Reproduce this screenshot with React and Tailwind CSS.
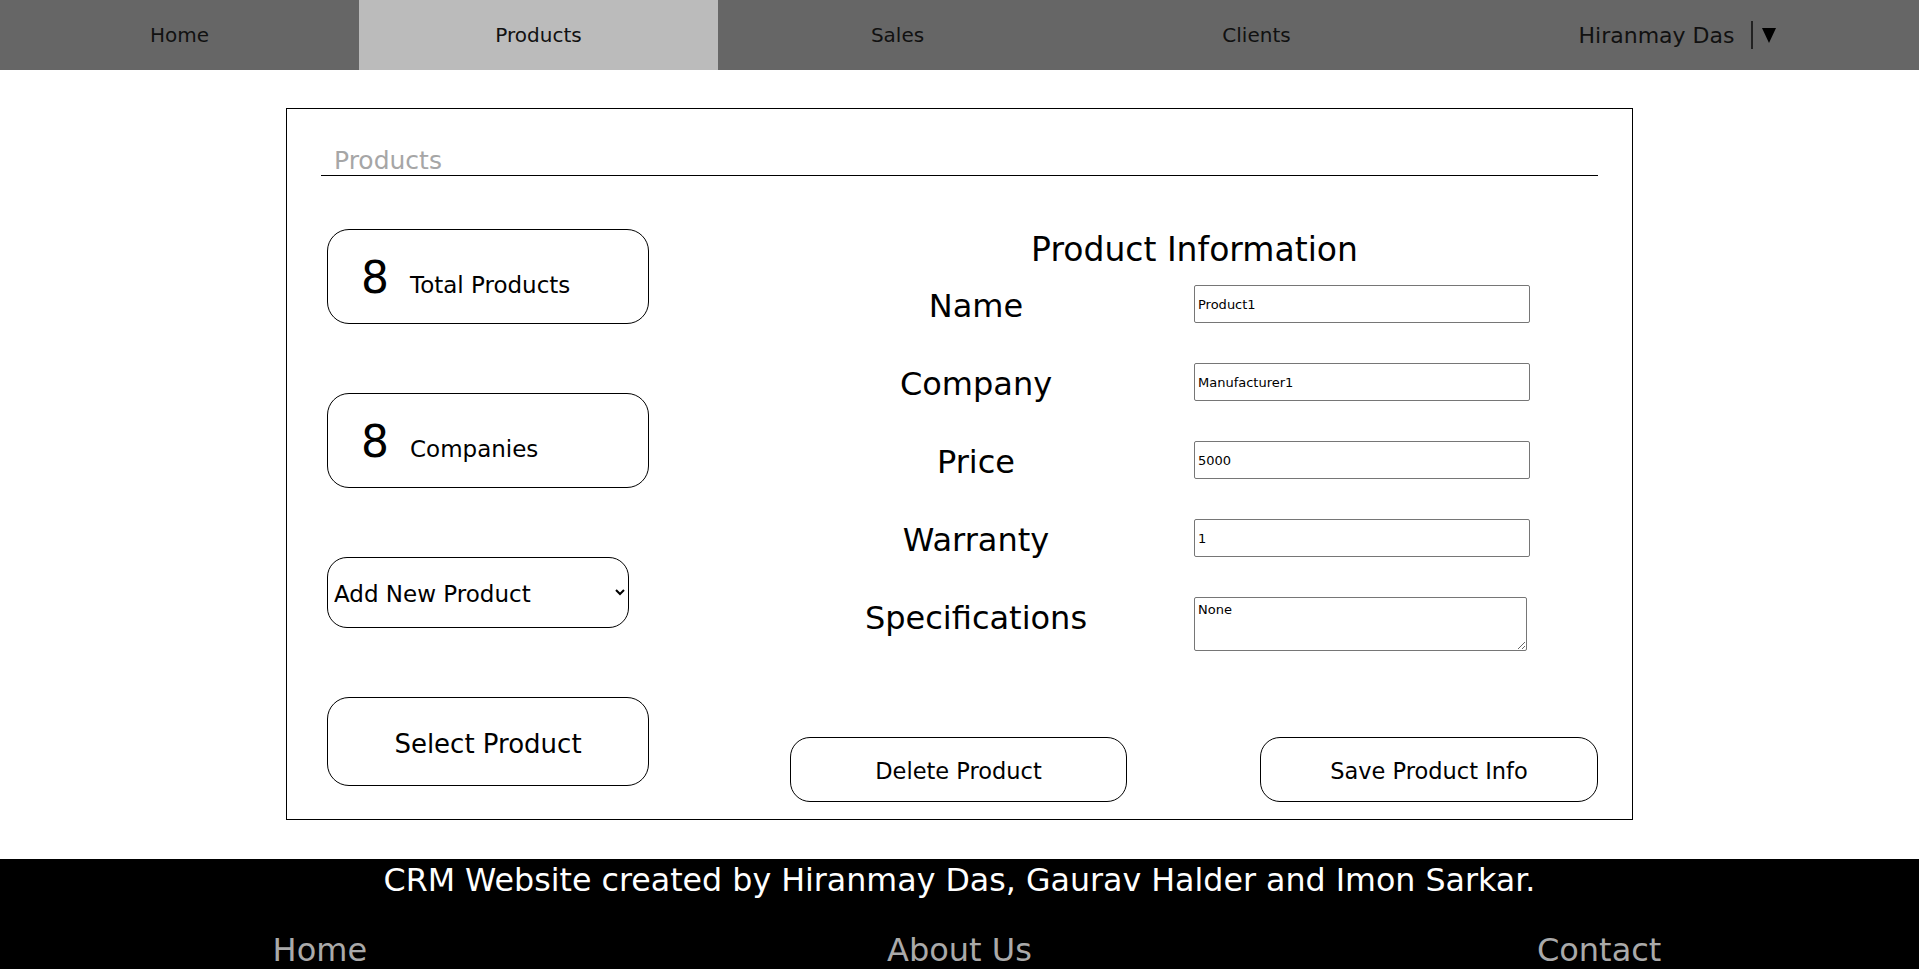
import React from 'react';

const navItems = ['Home', 'Products', 'Sales', 'Clients'];

const fields = [
  { label: 'Name', value: 'Product1' },
  { label: 'Company', value: 'Manufacturer1' },
  { label: 'Price', value: '5000' },
  { label: 'Warranty', value: '1' },
];

const StatCard = ({ count, label }) => (
  <div className="flex h-[95px] items-center rounded-[22px] border border-black pl-[33px] pt-[2px]">
    <div className="flex items-baseline">
      <span className="text-[44px]">{count}</span>
      <span className="ml-[21px] text-[23px]">{label}</span>
    </div>
  </div>
);

const App = () => {
  return (
    <div className="min-h-screen bg-white font-['DejaVu_Sans',sans-serif] text-black">
      {/* top nav */}
      <nav className="grid h-[70px] grid-cols-[359px_359px_359px_359px_1fr] bg-[#666666] text-[#111111]">
        {navItems.map((item) => (
          <a
            key={item}
            href="#"
            className={`flex items-center justify-center text-[20px] ${item === 'Products' ? 'bg-[#bbbbbb]' : ''}`}
          >
            {item}
          </a>
        ))}
        <div className="flex items-center justify-center">
          <span className="text-[22px]">Hiranmay Das</span>
          <span className="ml-[17px] h-[28px] w-[2px] bg-[#222222]" />
          <svg className="ml-[9px]" width="14" height="15" viewBox="0 0 14 15">
            <polygon points="0,0 14,0 7,15" fill="#000" />
          </svg>
        </div>
      </nav>

      {/* products panel */}
      <main className="mx-auto mb-[39px] mt-[38px] w-[1347px] border border-black px-[34px] pb-[17px] pt-[38px]">
        <h1 className="border-b border-black pl-[13px] text-[25px] leading-[28px] text-[#a6a6a6]">Products</h1>

        <div className="mt-[53px] flex items-start">
          <div className="ml-[6px] flex w-[322px] shrink-0 flex-col gap-[69px]">
            <StatCard count="8" label="Total Products" />
            <StatCard count="8" label="Companies" />
            <select className="h-[71px] w-[302px] rounded-[20px] border border-black pl-[2px] pt-[2px] text-[23px]" defaultValue="new">
              <option value="new">Add New Product</option>
              <option value="p1">Product1</option>
              <option value="p2">Product2</option>
            </select>
            <button className="h-[89px] rounded-[22px] border border-black pt-[5px] text-[26px]">Select Product</button>
          </div>

          <div className="-mr-[34px] ml-[109px] w-[873px] shrink-0">
            <h2 className="mt-[2px] text-center text-[33px] leading-[37px]">Product Information</h2>
            <div className="mt-[17px] flex flex-col gap-[40px]">
              {fields.map((f) => (
                <div key={f.label} className="grid grid-cols-[436px_1fr] items-start">
                  <label className="h-[38px] text-center text-[32px] leading-[43px]">{f.label}</label>
                  <input
                    type="text"
                    defaultValue={f.value}
                    className="h-[38px] w-[336px] rounded-[2px] border border-[#767676] px-[3px] text-[13px]"
                  />
                </div>
              ))}
              <div className="grid grid-cols-[436px_1fr] items-start">
                <label className="h-[38px] text-center text-[32px] leading-[43px]">Specifications</label>
                <textarea
                  defaultValue="None"
                  className="h-[54px] w-[333px] rounded-[2px] border border-[#767676] px-[3px] py-[2px] text-[13px]"
                />
              </div>
            </div>
            <div className="mt-[86px] flex">
              <button className="ml-[32px] h-[65px] w-[337px] rounded-[20px] border border-black pt-[5px] text-[22.5px]">Delete Product</button>
              <button className="ml-[133px] h-[65px] w-[338px] rounded-[20px] border border-black pt-[5px] text-[22.5px]">Save Product Info</button>
            </div>
          </div>
        </div>
      </main>

      {/* footer */}
      <footer className="bg-black pb-[30px] pt-[3px]">
        <p className="text-center text-[31.7px] leading-[37px] text-white">
          CRM Website created by Hiranmay Das, Gaurav Halder and Imon Sarkar.
        </p>
        <div className="mt-[33px] grid grid-cols-3 text-center text-[32px] leading-[37px] text-[#aaaaaa]">
          <a href="#">Home</a>
          <a href="#">About Us</a>
          <a href="#">Contact</a>
        </div>
      </footer>
    </div>
  );
};

export default App;
